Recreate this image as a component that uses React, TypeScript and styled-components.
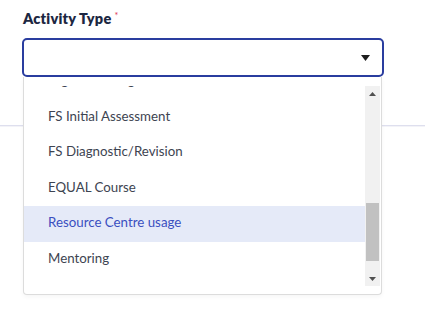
import styled, { createGlobalStyle } from "styled-components";

const GlobalStyle = createGlobalStyle`
  * { box-sizing: border-box; }
  html, body { margin: 0; padding: 0; background: #ffffff; }
  body { font-family: Lato, "Noto Sans", Arial, sans-serif; }
`;

const options = [
  "Digital Training",
  "FS Initial Assessment",
  "FS Diagnostic/Revision",
  "EQUAL Course",
  "Resource Centre usage",
  "Mentoring",
];

const activeOption = "Resource Centre usage";

export default function App() {
  return (
    <>
      <GlobalStyle />
      <Page>
        <Section>
          <Field>
            <Label>
              Activity Type<Required>*</Required>
            </Label>
            <SelectBox>
              <Caret width="9" height="6" viewBox="0 0 9 6">
                <path d="M0 0 H9 L4.5 6 Z" fill="#1e1e1e" />
              </Caret>
            </SelectBox>
            <Menu>
              <Viewport>
                <OptionList>
                  {options.map((option) => (
                    <Option key={option} $active={option === activeOption}>
                      {option}
                    </Option>
                  ))}
                </OptionList>
              </Viewport>
              <ScrollBar>
                <ScrollButton>
                  <svg width="7" height="4" viewBox="0 0 7 4">
                    <path d="M0 4 H7 L3.5 0 Z" fill="#505050" />
                  </svg>
                </ScrollButton>
                <ScrollTrack>
                  <ScrollThumb style={{ marginTop: 102, height: 58 }} />
                </ScrollTrack>
                <ScrollButton>
                  <svg width="7" height="4" viewBox="0 0 7 4">
                    <path d="M0 0 H7 L3.5 4 Z" fill="#505050" />
                  </svg>
                </ScrollButton>
              </ScrollBar>
            </Menu>
          </Field>
        </Section>
      </Page>
    </>
  );
}

const Page = styled.div`
  width: 425px;
  height: 320px;
  background: #ffffff;
`;

const Section = styled.div`
  height: 126px;
  padding: 10px 22px 0;
  border-bottom: 1px solid #dedfee;
  box-shadow: 0 1px 0 #f3f3f8;
`;

const Field = styled.div`
  position: relative;
  width: 362px;
  display: flex;
  flex-direction: column;
  gap: 10px;
`;

const Label = styled.label`
  display: flex;
  align-items: flex-start;
  padding-left: 1px;
  font-size: 14.5px;
  line-height: 18px;
  font-weight: 800;
  color: #1c2742;
  letter-spacing: 0.2px;
`;

const Required = styled.span`
  color: #e0314b;
  font-size: 9px;
  line-height: 12px;
  font-weight: 400;
  margin-left: 3px;
`;

const SelectBox = styled.div`
  height: 39px;
  border: 2px solid #2a3d9f;
  border-radius: 5px;
  display: flex;
  align-items: center;
  justify-content: flex-end;
  padding-right: 12px;
  background: #ffffff;
`;

const Caret = styled.svg`
  display: block;
`;

const Menu = styled.div`
  position: absolute;
  top: 100%;
  left: 1px;
  width: 359px;
  height: 218px;
  display: flex;
  padding: 9px 0 8px;
  background: #ffffff;
  border: 1px solid #dcdcdc;
  border-top: none;
  border-radius: 0 0 4px 4px;
  box-shadow: 0 2px 4px rgba(0, 0, 0, 0.04);
`;

const Viewport = styled.div`
  flex: 1;
  overflow: hidden;
`;

const OptionList = styled.ul`
  list-style: none;
  margin: -22px 0 0;
  padding: 0;
`;

const Option = styled.li<{ $active?: boolean }>`
  height: 35.5px;
  display: flex;
  align-items: center;
  padding: 0 0 3px 24px;
  font-size: 13.3px;
  color: ${(p) => (p.$active ? "#3a4fc0" : "#3d4451")};
  background: ${(p) => (p.$active ? "#e5eaf8" : "transparent")};
`;

const ScrollBar = styled.div`
  width: 15px;
  margin-right: 1px;
  display: flex;
  flex-direction: column;
  background: #f1f1f1;
`;

const ScrollButton = styled.div`
  height: 15px;
  display: flex;
  align-items: center;
  justify-content: center;
`;

const ScrollTrack = styled.div`
  flex: 1;
  display: flex;
  flex-direction: column;
  padding: 0 1px;
`;

const ScrollThumb = styled.div`
  background: #c1c1c1;
`;
